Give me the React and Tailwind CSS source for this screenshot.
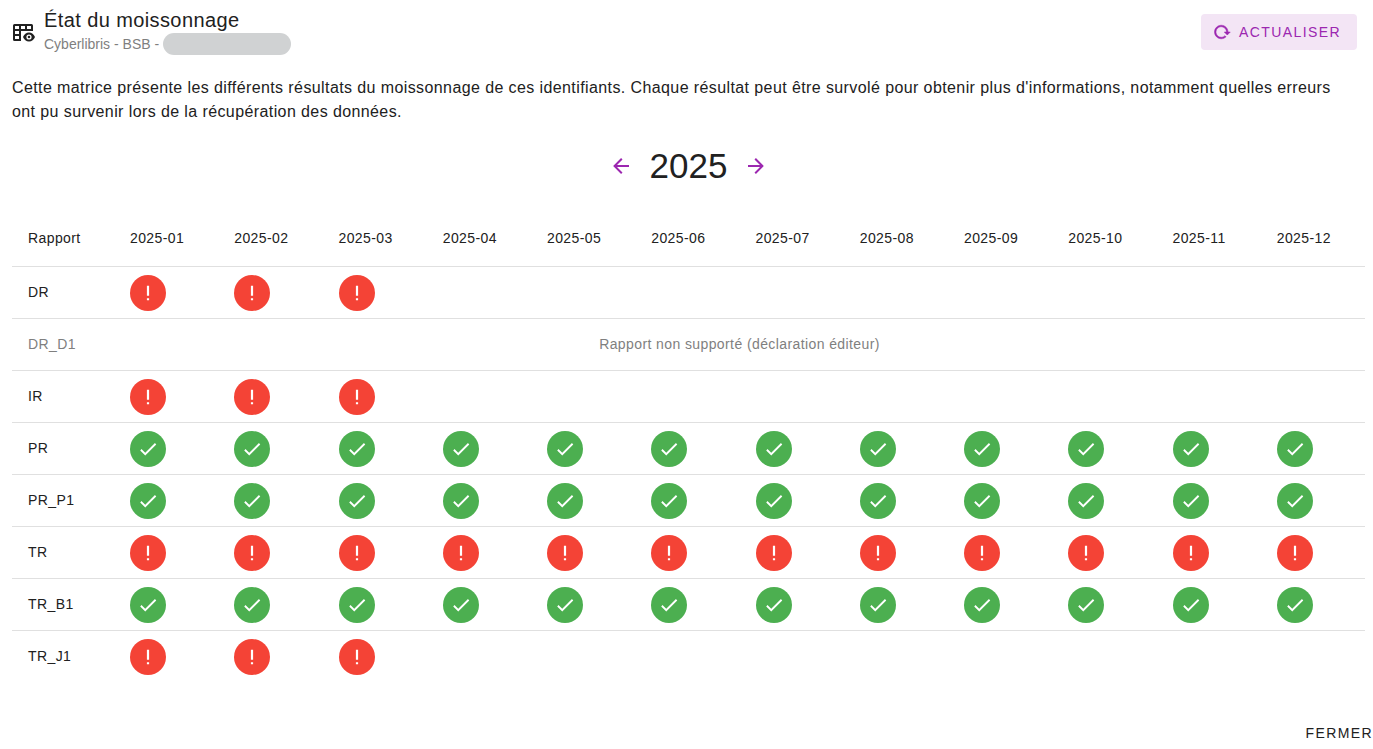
const YEAR = 2025
const months = Array.from({ length: 12 }, (_, i) => `${YEAR}-${String(i + 1).padStart(2, '0')}`)

const reports = [
  { id: 'DR', status: 'error', count: 3 },
  { id: 'DR_D1', unsupported: true },
  { id: 'IR', status: 'error', count: 3 },
  { id: 'PR', status: 'success', count: 12 },
  { id: 'PR_P1', status: 'success', count: 12 },
  { id: 'TR', status: 'error', count: 12 },
  { id: 'TR_B1', status: 'success', count: 12 },
  { id: 'TR_J1', status: 'error', count: 3 },
]

const icons = {
  check: 'M21,7L9,19L3.5,13.5L4.91,12.09L9,16.17L19.59,5.59L21,7Z',
  exclamation: 'M10.8,4H13.2V15H10.8V4M10.8,17.6H13.2V20H10.8V17.6Z',
  arrowLeft: 'M20,11V13H8L13.5,18.5L12.08,19.92L4.16,12L12.08,4.08L13.5,5.5L8,11H20Z',
  arrowRight: 'M4,11V13H16L10.5,18.5L11.92,19.92L19.84,12L11.92,4.08L10.5,5.5L16,11H4Z',
  reload: 'M2 12C2 16.97 6.03 21 11 21C13.39 21 15.68 20.06 17.4 18.4L15.9 16.9C14.63 18.25 12.86 19 11 19C4.76 19 1.64 11.46 6.05 7.05C10.46 2.64 18 5.77 18 12H15L19 16H19.1L23 12H20C20 7.03 15.97 3 11 3C6.03 3 2 7.03 2 12Z',
  tableEye: 'M2.5 4H19.5A1.5 1.5 0 0 1 21 5.5V11H9V21H2.5A1.5 1.5 0 0 1 1 19.5V5.5A1.5 1.5 0 0 1 2.5 4M3 6V9H7V6H3M9 6V9H13V6H9M15 6V9H19V6H15M3 11V14H7V11H3M3 16V19H7V16H3M17 12.5C19.7 12.5 22 14.3 23 17C22 19.7 19.7 21.5 17 21.5S12 19.7 11 17C12 14.3 14.3 12.5 17 12.5M17 14.4A2.6 2.6 0 0 0 17 19.6A2.6 2.6 0 0 0 17 14.4M17 15.7A1.3 1.3 0 0 1 17 18.3A1.3 1.3 0 0 1 17 15.7Z',
}

export default function App() {
  return (
    <div className="font-['Liberation_Sans',Arial,sans-serif] text-[#212121] tracking-wide">
      <header className="flex items-center pt-2 pl-3 pr-4">
        <Icon name="tableEye" className="w-6 h-6 mr-2" />
        <div className="flex-1">
          <h1 className="text-xl leading-6">État du moissonnage</h1>
          <div className="flex items-center text-sm leading-6 tracking-normal text-[#7f7f7f]">
            Cyberlibris - BSB -
            <span className="w-32 h-[22px] ml-1 rounded-full bg-[#d0d2d3]" />
          </div>
        </div>
        <button className="flex items-center h-9 pl-3 pr-4 rounded bg-[#f3e5f5] text-[#9c27b0] text-sm tracking-widest uppercase">
          <Icon name="reload" className="w-[18px] h-[18px] mr-2 stroke-current stroke-[0.7]" />
          Actualiser
        </button>
      </header>

      <main className="pl-3 pr-2 pt-5">
        <p className="leading-6 pr-4">
          Cette matrice présente les différents résultats du moissonnage de ces identifiants. Chaque résultat peut être survolé pour obtenir plus d'informations, notamment quelles erreurs ont pu survenir lors de la récupération des données.
        </p>

        <div className="flex items-center justify-center gap-[17px] mt-[22px] text-[#9c27b0]">
          <button aria-label="Année précédente">
            <Icon name="arrowLeft" className="w-6 h-6" />
          </button>
          <h2 className="text-[35px] leading-10 tracking-normal text-[#212121]">{YEAR}</h2>
          <button aria-label="Année suivante">
            <Icon name="arrowRight" className="w-6 h-6" />
          </button>
        </div>

        <table className="w-full table-fixed border-separate border-spacing-0 mt-[25px] text-sm">
          <thead>
            <tr className="h-14">
              <th className="w-[102px] px-4 pb-0.5 text-left font-normal border-b border-[#e0e0e0]">Rapport</th>
              {months.map((month) => (
                <th key={month} className="pl-4 pb-0.5 text-left font-normal border-b border-[#e0e0e0]">{month}</th>
              ))}
            </tr>
          </thead>
          <tbody>
            {reports.map((report) => <ReportRow key={report.id} report={report} />)}
          </tbody>
        </table>
      </main>

      <footer className="flex justify-end mt-8">
        <button className="h-9 text-sm tracking-widest uppercase">Fermer</button>
      </footer>
    </div>
  )
}

function ReportRow({ report }) {
  if (report.unsupported) {
    return (
      <tr className="h-[52px] text-[#7f7f7f]">
        <td className="px-4 pb-0.5 border-b border-[#e0e0e0]">{report.id}</td>
        <td colSpan={12} className="px-4 pb-0.5 text-center border-b border-[#e0e0e0]">Rapport non supporté (déclaration éditeur)</td>
      </tr>
    )
  }

  return (
    <tr className="h-[52px] group">
      <td className="px-4 pb-0.5 border-b border-[#e0e0e0] group-last:border-b-0">{report.id}</td>
      {months.map((month, i) => (
        <td key={month} className="pl-4 border-b border-[#e0e0e0] group-last:border-b-0">
          {i < report.count && <Status status={report.status} />}
        </td>
      ))}
    </tr>
  )
}

function Status({ status }) {
  if (status === 'error') {
    return (
      <button aria-label="Erreur" className="flex items-center justify-center w-9 h-9 rounded-full bg-[#f44336] text-white">
        <Icon name="exclamation" className="w-[22px] h-[22px]" />
      </button>
    )
  }
  return (
    <button aria-label="Succès" className="flex items-center justify-center w-9 h-9 rounded-full bg-[#4caf50] text-white">
      <Icon name="check" className="w-[22px] h-[22px]" />
    </button>
  )
}

function Icon({ name, className }) {
  return (
    <svg viewBox="0 0 24 24" fill="currentColor" fillRule="evenodd" className={className} aria-hidden="true">
      <path d={icons[name]} />
    </svg>
  )
}
